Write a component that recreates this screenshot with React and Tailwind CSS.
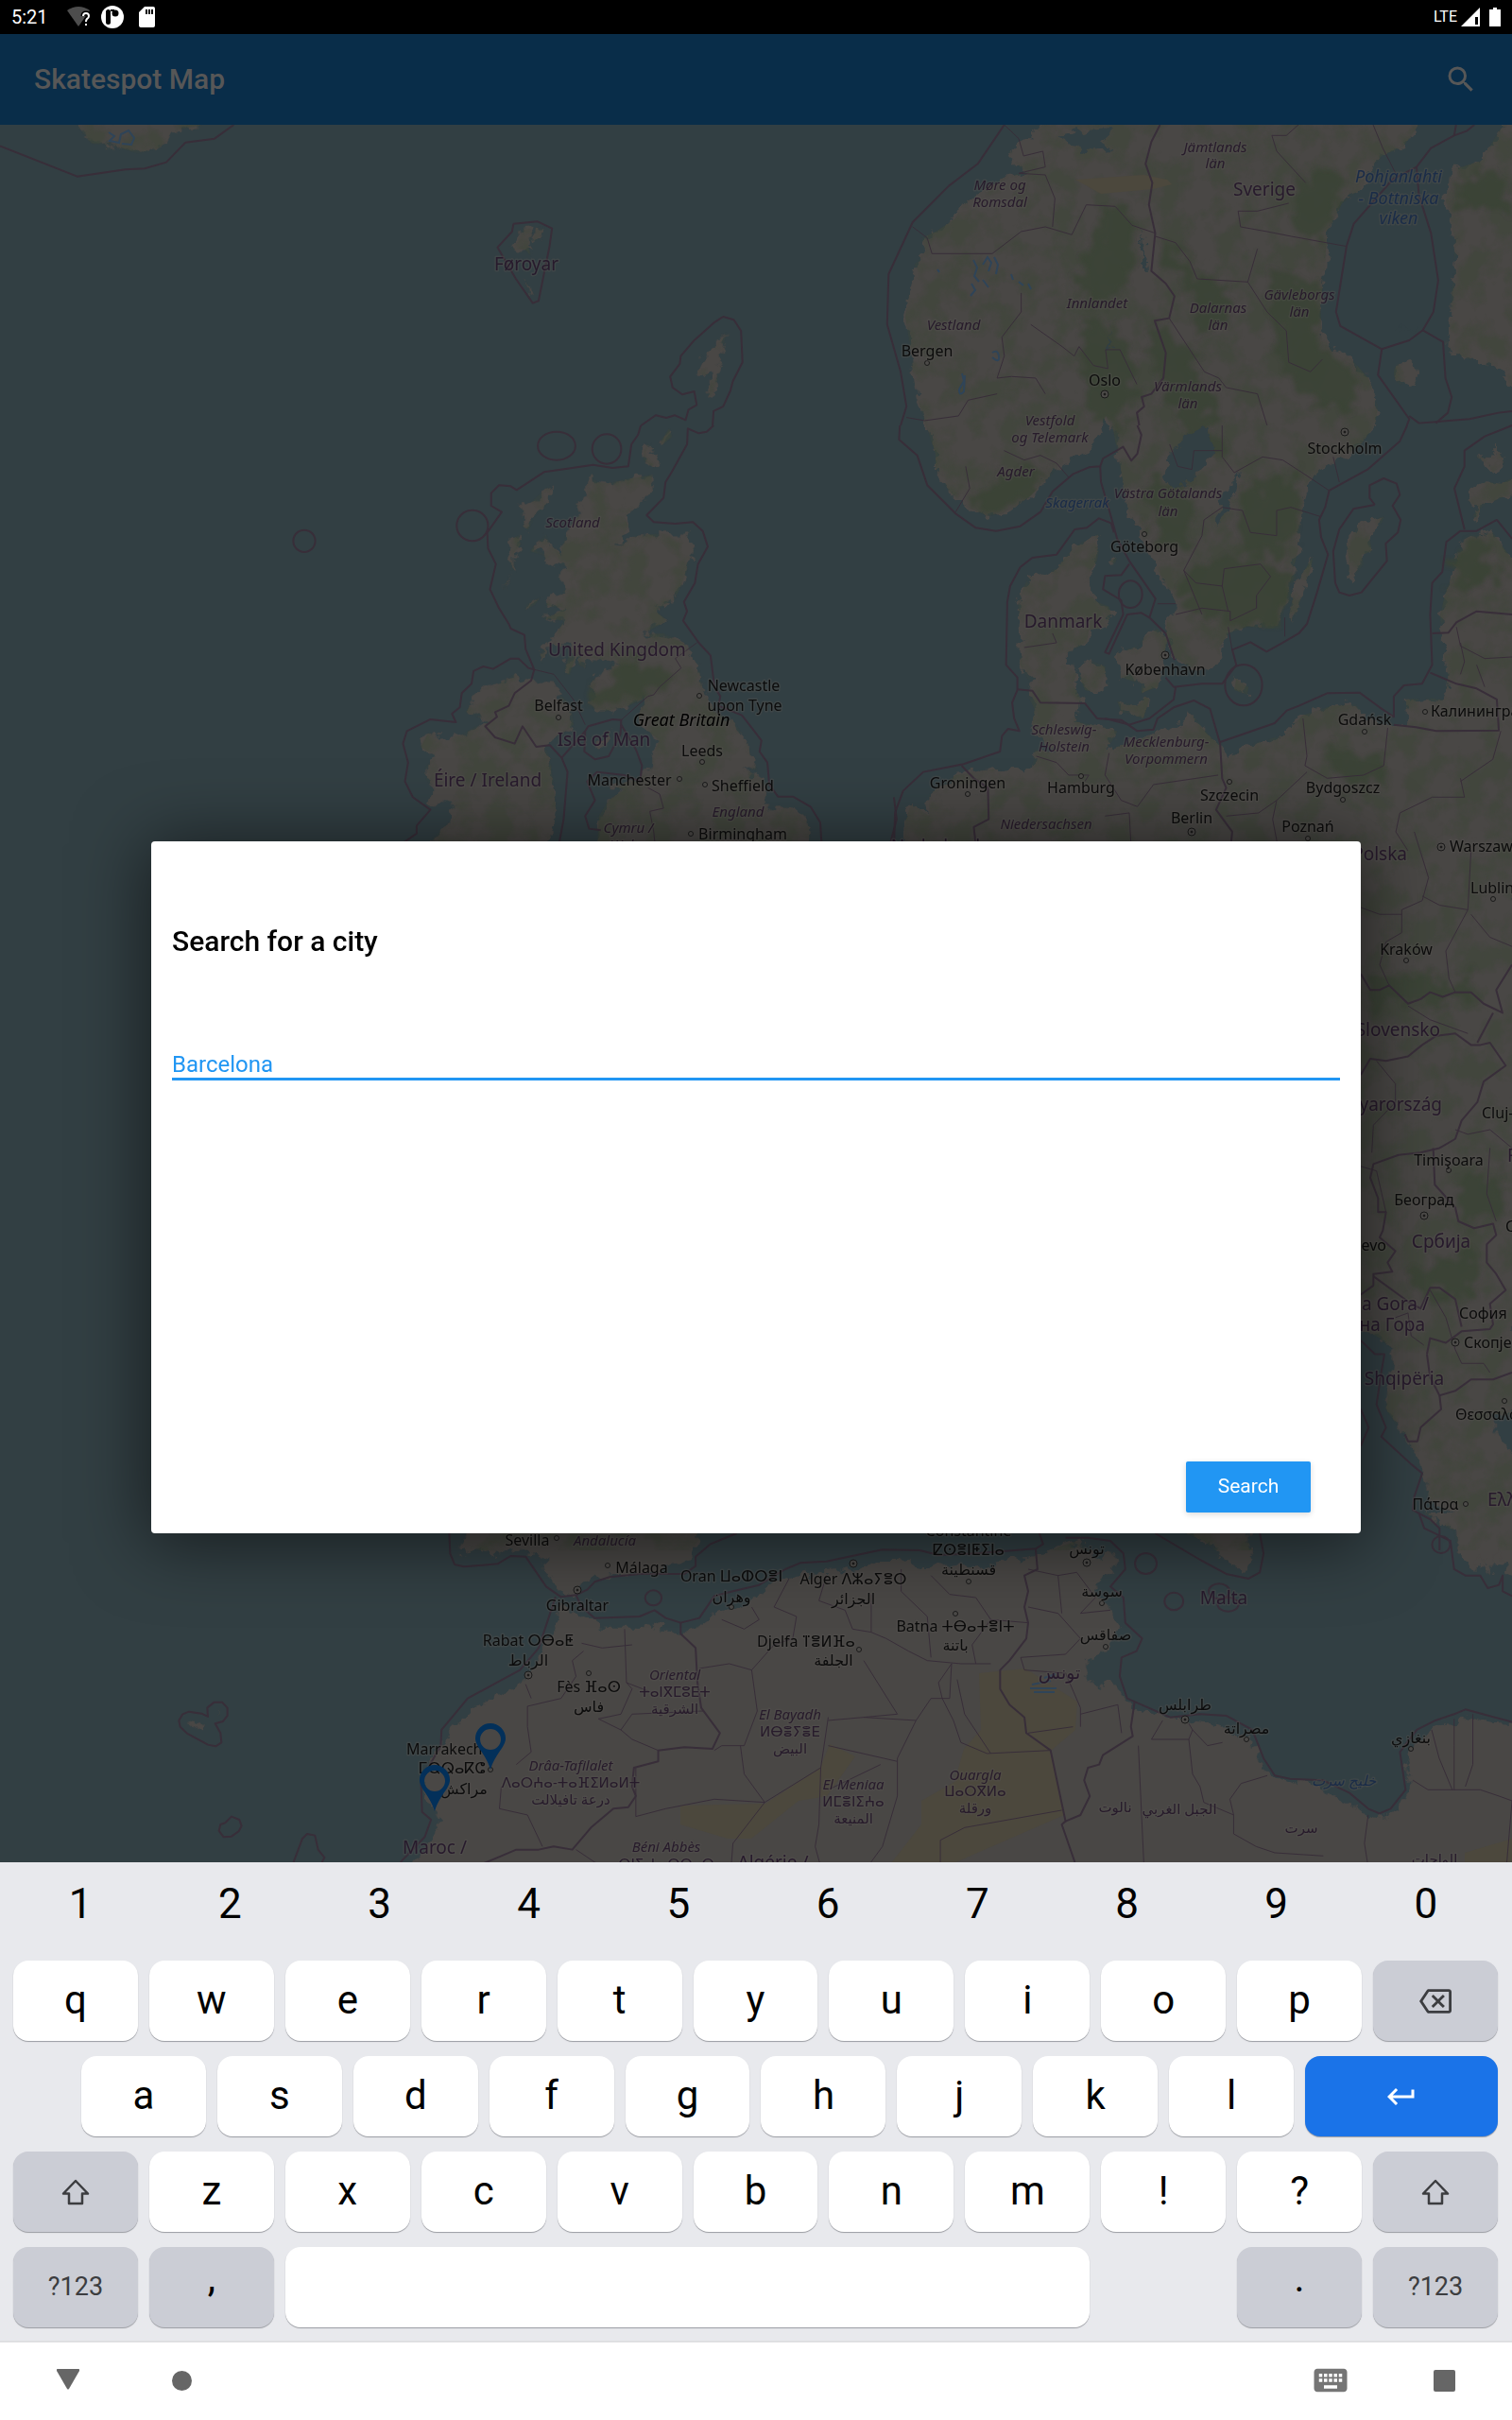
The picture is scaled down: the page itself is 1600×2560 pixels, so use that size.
import React, { useState } from "react";
import { MdSearch, MdOutlineBackspace, MdKeyboardReturn, MdKeyboard } from "react-icons/md";

/* Each map sheet is digitised on its own grid; `t` places it on the map. */
const SHEETS = [
  {
    t: "scale(.5102 .3333)",
    land: [
      "150,380 430,380 415,398 370,410 330,470 290,488 230,460 190,455",
      "1505,1055 1500,1110 1490,1150 1495,1165 1480,1250 1470,1260 1475,1190 1450,1190 1450,1160 1470,1110 1485,1100",
      "1085,730 1100,725 1105,745 1095,775 1100,810 1088,790 1060,790 1075,765",
      "1112,722 1130,720 1118,760 1105,765",
      "1088,880 1105,930 1095,925",
    ],
    lines: [
      "0,463 160,560 260,538 300,535 345,515 370,475 385,452 445,440 485,396",
      "1065,710 1115,703 1145,725 1140,780 1117,955 1105,962 1070,885 1032,785 1062,735 1065,710",
      "1330,1350 1360,1318 1382,1326 1400,1318 1422,1333 1428,1300 1445,1285 1440,1242 1415,1252 1395,1230 1390,1195 1410,1155 1412,1130 1440,1080 1480,1025 1500,1005 1522,1015 1537,1050 1540,1150 1520,1210 1515,1240 1500,1290 1480,1305 1478,1350",
    ],
    thin: [],
  },
  {
    t: "translate(800 0) scale(.5102 .3333)",
    land: [],
    lines: [
      "515,396 460,520 400,590 325,705 275,870 272,1030 300,1180 312,1290 300,1350",
      "838,396 820,450 808,520 822,580 815,650 828,740 820,860 850,900 868,940 857,1010 827,1018 850,1120 845,1200 820,1250 800,1260 805,1290 790,1310 795,1350",
      "1490,396 1475,415 1448,430 1400,470 1370,530 1320,570 1240,710 1225,780 1203,990 1212,1035 1298,1108 1290,1190 1355,1330 1350,1350",
      "1448,430 1452,396",
      "1370,530 1375,620 1400,740 1415,890 1405,990 1383,1048 1355,1080 1298,1108",
      "1355,1320 1375,1343 1480,1330 1540,1310 1568,1305",
      "1383,1048 1425,1085 1430,1200 1443,1260 1435,1310 1410,1343",
    ],
    thin: [
      "515,396 545,440 555,495 595,480 600,530 545,550",
      "545,550 600,555 620,630 615,720",
      "325,720 355,755 365,805 490,805 550,735 600,720 655,745 685,650 745,655 780,715 828,740",
      "828,750 870,770 900,830 915,885 1020,895 1040,790",
      "1280,396 1300,470 1330,560",
      "1125,396 1100,430 1070,430 1080,480 1140,580",
      "1105,645 1040,670 1000,670 1005,720 1060,735 1110,750 1225,782",
      "1020,895 1060,990 1100,1050 1105,1150 1150,1180 1175,1140",
      "550,930 550,990 510,1070 515,1130 500,1200 530,1195 580,1200 600,1250",
      "570,1030 635,1100 660,1130 670,1100 700,1160 730,1170 725,1110 755,1110 790,1220",
      "857,1010 930,1180 960,1200 975,1230 1040,1250 1060,1350",
      "312,1325 350,1335 420,1320 440,1270 500,1250",
    ],
  },
  {
    t: "translate(300 450) scale(.4146 .3333)",
    land: [
      "785,165 800,180 830,185 870,172 940,158 940,210 905,250 870,290 880,320 850,385 900,350 950,345 1030,347 1050,380 1040,430 1020,490 1000,550 960,580 950,590 980,620 910,665 970,660 1020,690 1060,760 1070,840 1100,910 1150,940 1185,1010 1190,1040 1210,1095 1170,1085 1230,1130 1225,1210 1300,1215 1340,1260 1345,1330 1340,1360 800,1360 805,1240 830,1190 870,1155 820,1140 900,1130 945,1080 940,1050 960,1000 910,950 905,920 930,860 880,890 830,905 800,905 775,880 790,850 780,830 800,790 860,760 830,745 770,735 770,770 755,760 750,720 730,790 715,790 725,740 740,720 725,700 690,700 660,740 655,730 680,680 690,680 715,620 665,612 690,600 720,580 670,570 680,540 720,520 700,490 715,470 725,450 680,440 660,410 630,400 640,380 670,350 690,390 710,410 710,370 720,340 735,310 760,280 745,250 775,230 765,210",
      "680,190 680,240 640,290 625,330 610,320 620,290 605,270 605,250 635,240",
      "600,350 605,380 590,400 590,460 580,460 580,400 570,370",
      "575,480 570,500 560,520", "655,545 640,570 615,585 620,570",
      "590,790 615,810 690,815 700,850 720,870 735,900 740,950 730,960 700,990 670,1020 680,1060 690,1150 695,1220 670,1360 370,1360 380,1310 430,1250 430,1210 370,1200 380,1150 350,1100 390,1050 350,1020 370,975 400,985 450,985 500,950 520,940 465,910 500,840 550,820",
      "790,1020 835,965 830,990 805,1025", "930,60 945,70 935,90 960,90 960,105 940,130 920,110 920,80", "985,10 992,35 970,60 960,55",
    ],
    lines: [
      "912,0 905,30 888,60 880,130 840,135 790,125 725,137 665,148 595,205 580,193 550,190 530,215 530,255 557,275 520,340 522,390 542,440 527,520 550,580 575,630 580,645 615,665 618,710 640,775 625,770 600,740 580,740 535,773 510,765 485,780 480,820 455,850 450,895 430,915 440,942 375,933 315,970 305,1010 318,1070 310,1130 330,1180 375,1220 340,1270 340,1295 300,1330",
      "1098,0 1080,20 1060,25 1032,10 1030,60 990,150 975,180 970,230 927,285 945,307 1000,312 1045,307 1070,335 1083,385 1058,440 1050,500 1022,560 1030,590 1020,620 1060,690 1090,730 1100,830 1115,860 1110,890 1170,920 1195,960 1220,1000 1215,1035 1235,1070 1240,1140 1262,1178 1300,1178 1345,1210 1370,1260 1373,1320",
      "640,775 632,810 590,850 575,890 540,910 545,925 515,955 540,990 590,1010 610,955 645,1020 680,1015 710,1055 725,1100 715,1250 700,1350",
      "710,1055 770,970 778,955 840,933 862,935 860,980 830,1050 795,1060 768,1035 770,970",
      "862,950 900,1030 915,1080 910,1130 870,1110 800,1100 775,1130 795,1190 770,1240 780,1280 810,1285",
      "1558,1180 1565,1250 1548,1330",
    ],
    thin: [
      "640,775 690,790 740,870 770,950",
      "862,935 930,860 945,855 960,830 1015,770 1000,740 1055,690",
      "930,1150 960,1170 970,1215 935,1225 945,1290 950,1350",
    ],
    rings: [[697, 65, 48, 45], [825, 75, 37, 47], [482, 318, 40, 49], [53, 367, 28, 35]],
  },
  {
    t: "translate(930 450) scale(.4274 .3333)",
    land: [
      "545,345 535,370 545,400 540,430 520,470 525,540 540,560 570,575 575,600 560,640 520,650 515,690 470,720 470,750 490,790 480,820 500,870 490,940 560,960 590,970 585,990 560,1030 640,1000 700,970 750,950 770,910 790,940 800,960 830,1000 850,1020 860,1060 920,1010 1000,985 1050,920 1120,890 1180,885 1220,940 1310,960 1305,870 1350,865 1400,870 1410,800 1395,700 1390,600 1405,520 1425,460 1440,380 1480,350 1520,340 1570,430 1640,430 1640,1400 60,1400 65,1260 80,1200 125,1240 125,1170 190,1110 260,1095 330,1085 360,1110 380,1080 385,1030 440,1040 400,990 380,950 385,900 370,860 380,830 350,760 350,700 345,560 370,480 440,455 480,390 510,365",
      "490,770 520,745 560,765 565,830 540,850 510,840", "590,720 640,700 660,670 690,645 715,680 700,760 690,830 650,850 650,820 600,800 590,760", "590,875 640,890 660,860 670,870 655,930 600,910", "885,805 915,830 912,855 880,840",
      "1250,290 1245,310 1215,345 1220,400 1195,410 1200,440 1165,500 1158,470 1165,430 1158,380 1190,310", "1075,415 1070,450 1035,590 1020,625 1015,600 1035,500",
      "1460,200 1500,180 1540,185 1580,160 1580,230 1550,225 1490,260 1480,300 1470,290 1485,260 1460,240", "1480,100 1510,100 1530,70 1550,120 1520,150 1505,120", "570,430 590,420 585,440",
    ],
    lines: [
      "52,0 50,45 95,95 120,190 190,280 240,325 290,335 350,320 400,275 430,210 480,155 520,133 548,130 555,105 605,68 625,112 640,90 650,30 640,0",
      "1308,0 1290,50 1210,140 1115,207 1105,260 1090,300 1095,355 1112,410 1085,530 1060,630 1040,660 1000,690 960,718 920,688 875,712 885,760 850,820 800,820 730,830 710,800",
      "1228,252 1215,230 1215,190 1250,168 1282,185 1290,220 1272,255 1292,300 1285,340 1255,375 1258,430 1220,490 1195,530 1165,540 1140,530 1130,500 1125,400 1140,330 1175,265 1228,252",
      "582,340 575,310 545,295 515,325 485,330 440,410 380,420 350,450 325,510 318,560 315,760 343,800 343,840 330,880 335,930 348,970 320,963 305,985 300,1035 210,1075 110,1100 60,1160 40,1230 38,1320",
      "845,1005 980,945 1010,905 1040,890 1110,850 1190,848 1240,895 1275,925 1275,860 1300,825 1345,820 1370,760 1365,600 1370,500 1395,465 1405,370 1440,335 1480,335 1530,300 1568,360",
      "1450,330 1425,200 1450,130 1450,80 1500,35 1568,0",
      "343,838 380,842 400,880 510,882 540,930 600,935 640,970 680,965 690,930 730,895 780,873 820,900 845,1010 850,1120 860,1150 835,1220 875,1290 870,1350",
      "548,130 550,180 575,290 590,360 620,430 685,550 670,610 710,660 732,745",
      "620,440 600,475 560,478 555,520 600,555 605,600 560,720 570,725 615,600 650,595 670,610",
      "735,830 730,870 670,930 620,950 560,930", "1275,950 1330,958 1380,970 1535,968 1530,870 1480,835 1430,820 1365,785",
      "1370,660 1410,658 1430,625 1480,590 1568,600", "205,1080 235,1120 270,1150 272,1250 235,1275 240,1330",
    ],
    thin: [
      "430,660 440,690 360,705", "865,640 875,715", "690,566 735,566", "1005,610 1005,670",
      "735,600 800,580 870,590 870,620 935,580 935,540 970,480 945,440 855,455 850,510 785,500 755,460 800,350 805,300 850,260 900,270 920,340 985,350 985,270 1020,260 1095,290",
      "755,460 800,600", "850,510 865,590", "310,80 360,110 400,95 440,120 470,165", "215,130 225,200 190,275",
      "1050,930 1060,1050 1055,1080 1110,1120 1200,1110 1250,1080 1260,960", "1440,1120 1450,1180 1370,1180 1290,1230 1280,1290 1310,1350",
      "1540,970 1520,1060 1440,1130", "985,1190 975,1250 990,1350", "860,1240 940,1230 985,1190 1060,1100",
      "390,1050 440,1070 470,1110 520,1110 510,1130", "570,1040 560,1110 600,1190 640,1210 680,1140 840,1110",
      "560,1240 620,1230 625,1350", "1440,690 1450,750 1440,790", "1430,640 1440,700 1500,740 1568,735", "1480,760 1500,830", "850,0 850,100 880,150 950,100 1000,110 1060,160 1115,207", "1125,100 1140,180",
      "720,60 740,130 775,140 780,80 850,80",
    ],
    rings: [[903, 824, 46, 65], [623, 536, 29, 43]],
  },
  {
    t: "translate(1380 880) scale(.3333 .4847)",
    land: [
      "-200,-10 670,-10 670,1275 600,1270 600,1300 640,1340 670,1370 670,1600 530,1600 470,1510 480,1490 400,1460 370,1370 330,1330 260,1260 285,1130 240,1105 200,1090 -200,900",
    ],
    lines: [
      "180,310 210,345 240,345 270,335 330,375 370,365 400,350 440,360 480,350 530,350 570,375 630,395 610,345 660,290",
      "180,530 210,495 260,500 330,490 375,465 420,445 480,440 530,465 560,465 590,460 640,510 570,545 550,590 500,630 480,670 430,690 370,700 300,705 220,725 210,755 235,800 235,830 260,830 250,870 240,885 290,915 265,940 280,960 220,965 220,990 180,1010",
      "600,395 550,460", "410,690 415,770 480,820 490,850 540,865 600,855 610,880 580,900 580,940 610,965 640,1000 590,1030 600,1075 590,1085 500,1090 450,1115 400,1105 390,1140",
      "220,970 300,1010 340,1030 370,1040 400,995 430,995 480,1020 500,1080", "390,1140 400,1190 430,1230 480,1220 530,1195 600,1195 660,1180", "430,1230 435,1260 370,1300 360,1330 330,1330 320,1315",
      "180,1110 225,1140 255,1140 245,1180 230,1250 260,1300 245,1320 340,1380 375,1400 350,1450 345,1480 400,1500 430,1520 430,1568", "180,1260 205,1300 180,1340",
    ],
    thin: [
      "350,0 395,100 375,150 310,170 310,220 260,240 240,290 270,335", "375,140 430,160 520,170 530,40", "180,165 240,180 310,180", "520,170 450,260 460,320 480,350",
      "530,180 590,230 660,250", "230,500 290,550 290,590 220,640 215,700", "180,730 230,740 260,830", "480,650 520,660 590,650 660,690", "590,690 580,790 610,850",
      "400,1000 450,1060 480,1130 500,1160 570,1160 590,1180", "290,1060 330,1050 340,1100 380,1120", "330,380 400,410 520,440",
    ],
  },
  {
    t: "translate(400 1600) scale(.3954 .3333)",
    land: [
      "235,0 235,66 215,130 270,120 310,135 360,115 420,130 445,160 450,190 470,225 500,260 530,262 545,225 580,210 620,200 680,195 760,190 790,155 820,165 850,100 870,66 870,0",
      "490,290 480,350 440,420 420,490 380,545 310,590 250,620 190,700 150,760 130,830 125,900 165,960 150,1030 90,1130 3060,1130 3060,670 2980,665 2920,650 2830,690 2770,740 2750,800 2765,880 2710,960 2670,970 2610,930 2500,865 2400,840 2360,790 2340,720 2290,700 2250,670 2170,660 2100,650 2020,620 1985,570 1960,530 1930,560 1890,510 1890,480 1940,440 1990,370 1960,310 1930,270 1920,220 1960,200 1975,150 1960,120 1930,160 1910,120 1870,90 1820,110 1780,130 1700,150 1600,175 1500,165 1440,170 1400,150 1340,150 1290,180 1220,190 1150,195 1060,220 1020,260 980,300 900,320 850,370 800,380 760,370 740,350 720,370 690,365 600,365 550,330 520,310",
      "2150,60 2330,60 2330,110 2342,120 2325,180 2290,165 2260,140 2210,90", "2800,0 2880,60 2900,160 2935,180 2950,130 2975,200 2985,140 3000,120 3020,190 3060,220 3060,0", "2820,10 2840,40 2815,35",
    ],
    lines: [
      "190,40 193,130 205,165 230,172 320,163 355,138 395,140 450,235 490,268 530,262 560,245 580,220 620,205 700,195 820,195 850,170 850,140 890,100 960,66",
      "475,268 430,430 380,500 310,545 240,590 170,690 168,740 115,850 118,950 142,975 125,1030 60,1110",
      "530,262 545,300 580,335 700,330 740,310 770,335 810,350 860,335 900,265 950,250 1020,230 1090,180 1130,160 1200,155 1350,118 1450,120 1500,135 1600,130 1760,115 1780,100 1770,66",
      "1840,80 1900,80 1960,90 1995,130 2000,180 1960,235 1995,270 2000,350 2045,400 2030,440 1990,460 1985,520 2005,590 2120,650 2200,640 2270,645 2340,690 2370,780 2400,835 2440,845 2530,850 2600,890 2650,940 2680,955 2710,940 2750,880 2735,760 2780,690 2830,660 2880,640 2910,625 3035,665",
      "810,350 810,385 850,430 855,540 865,620 915,700 895,750 820,745 750,755 750,790 685,810 680,870 690,900 670,935 630,940 570,1000 520,1070 470,1060 430,1070 370,1070 330,1090 260,1125",
      "1760,115 1765,180 1730,200 1740,250 1730,300 1740,350 1735,400 1690,470 1665,500 1665,560 1690,610 1730,650 1735,700 1800,755 1840,980 1830,990 1865,1110",
      "2025,600 2015,680 2020,710 1940,770 1930,800 1900,810 1890,850 1905,900 1880,960 1840,980",
      "2080,66 2200,150 2270,195 2330,210 2360,190 2370,130 2360,66", "2785,0 2800,50 2870,90 2880,180 2910,200 2950,200 2970,240 3000,230 3010,200 3010,250 3035,265",
    ],
    thin: [
      "660,370 665,540 680,560 650,640 590,655", "665,540 730,570", "545,415 600,430 680,420", "550,440 520,470 530,520 490,590 400,615 400,680 410,760 370,800", "395,545 410,590",
      "590,655 650,690 680,720 750,755", "650,690 680,640 870,630", "860,495 940,480 1000,500 1015,630 980,740 920,740 900,755", "970,740 980,830 1035,920 1185,810 1205,650",
      "690,965 770,940 900,910 1035,920 950,1050 945,1125", "1185,810 1180,990 1170,1060 1185,1125", "1205,660 1300,650 1440,660 1390,780 1390,900 1350,1060 1310,1125", "1300,650 1390,640 1300,470",
      "1205,740 1390,790", "1440,660 1480,590 1530,590 1535,480", "1535,480 1500,540 1510,590 1540,660 1560,730 1630,765 1800,755", "1550,530 1570,640 1640,765", "1320,260 1320,380 1360,400 1420,440 1470,470 1560,480 1640,480",
      "1000,300 1020,340 980,370 920,340", "1100,210 1060,300 1120,330 1110,400 1060,420 1000,500", "1200,200 1180,280 1250,310 1270,370 1320,380", "1400,180 1400,250 1470,330 1480,460", "1480,200 1530,260 1600,270 1640,340 1740,350",
      "1640,340 1590,420 1600,480", "330,870 325,940 400,960 440,1060", "530,1070 580,1110 620,1125", "1505,1125 1505,1040 1570,1000 1830,945", "690,810 690,965", "1345,800 1205,880",
      "2035,740 2050,1125", "2170,720 2180,830 2200,870 2210,920 2290,960 2290,1020 2350,1060 2400,1080 2530,1090", "2380,835 2310,860 2280,910 2290,960", "2650,960 2640,1050 2650,1125", "2770,850 2810,880 2950,880 3000,900 3035,915 3020,1125",
      "2880,655 2880,740 2880,880", "2930,640 2930,800 2910,870", "2820,690 2840,780 2875,880", "2100,660 2070,720 2170,720 2180,690 2170,670", "2180,690 2220,740 2260,730",
      "1740,180 1820,200 1870,190 1920,270 1880,320 1960,310", "1740,300 1820,320 1880,400 1840,450 1720,460 1730,500 1840,510 1880,620 1880,680", "1820,200 1830,320", "1880,640 1980,610 1990,700", "1740,700 1860,680",
    ],
    rings: [[737, 271, 22, 24], [2055, 162, 29, 33], [2845, 102, 24, 27], [2251, 250, 28, 24], [2275, 292, 28, 22], [2130, 282, 25, 28]],
  },
  {
    t: "translate(0 1560) scale(.3333)",
    land: ["595,783 645,792 640,806 615,808", "680,762 697,748 692,758"],
    lines: [
      "600,752 640,758 660,768 658,740 680,722 705,722 722,740 722,765 708,783 683,790 700,820 703,850 685,862 660,857 595,822 572,800 568,780 580,760 600,752",
      "715,1105 735,1085 760,1095 767,1115 758,1132 735,1148 710,1150 695,1130 700,1110 715,1105", "932,1230 960,1155 975,1140 1000,1145 1010,1190 1030,1215 1022,1230",
    ],
    thin: [],
  },
];

const SCANDINAVIA =
  "1115,120 1090,145 1068,160 1072,170 1085,182 1065,186 1040,200 1030,208 1020,215 1010,232 990,245 975,252 980,265 968,280 964,300 958,335 962,360 966,395 972,425 980,450 990,480 990,500 1005,520 1022,536 1045,546 1065,543 1090,525 1110,505 1125,490 1150,478 1163,462 1170,440 1178,455 1185,490 1190,520 1195,545 1208,565 1218,590 1232,615 1246,643 1235,655 1234,670 1243,695 1258,705 1275,710 1293,705 1290,685 1300,670 1320,663 1348,665 1358,650 1366,613 1374,580 1378,540 1384,510 1400,495 1420,485 1440,470 1455,450 1458,430 1448,400 1430,380 1405,365 1398,345 1397,320 1402,290 1403,265 1405,245 1420,215 1440,200 1450,180 1462,165 1485,155 1510,120";
const FINLAND = "1600,120 1585,140 1568,170 1535,180 1530,213 1540,253 1535,333 1532,370 1555,380 1580,387 1612,420 1612,120";

const LAKES = [
  "1254,460 1278,452 1284,480 1267,498 1256,510 1246,515 1231,508 1238,482", "1312,498 1308,520 1293,552 1287,556 1293,525", "1173,342 1178,370 1172,372 1176,355",
  "1208,240 1213,285 1208,285", "1120,145 1150,138 1178,136 1165,150 1178,158 1150,160", "1478,345 1500,348 1478,352",
];

const GREENS = [
  "1215,342 1240,345 1260,380 1282,420 1290,480 1260,470 1240,430 1225,400", "1145,345 1190,350 1205,420 1180,460 1150,430", "1165,230 1190,215 1200,290 1170,320 1140,310",
  "1380,190 1405,175 1425,205 1395,260 1365,235", "1258,295 1300,300 1300,340 1268,350", "1340,290 1395,300 1395,370 1430,385 1440,430 1390,430 1350,370", "1230,260 1262,275 1258,300 1235,290",
  "1255,600 1300,590 1350,600 1365,610 1355,660 1300,660 1250,645", "1215,510 1255,500 1260,580 1220,570", "1310,520 1370,500 1375,560 1350,590 1310,580", "1070,500 1110,490 1090,520 1050,545 1025,530",
  "1540,190 1575,180 1600,190 1600,225 1545,220", "1530,590 1570,570 1590,620 1540,620", "1440,1030 1560,1035 1560,1060 1450,1065", "1490,1350 1560,1320 1560,1370 1510,1370", "1540,1245 1585,1240 1590,1290 1545,1290",
  "630,735 660,705 710,705 700,730 660,740 620,745", "1400,790 1460,800 1470,830 1420,830",
];

const DESERTS = [
  "720,1910 810,1908 868,1870 878,1845 905,1858 875,1900 845,1905 795,1945 770,1945 720,1930", "1036,1770 1085,1765 1140,1800 1138,1830 1112,1852 1126,1920 1000,1975 940,1975 975,1930 975,1905 1010,1885 1020,1850 1038,1830",
  "1550,1960 1600,1945 1600,1975 1550,1975", "1138,190 1210,185 1235,190 1240,195 1220,200 1165,205",
];

/* text, x, baseline, anchor (m = middle, s = start, e = end) */
const CITIES = [
  ["Bergen", 981, 377], ["Oslo", 1169, 408], ["Belfast", 591, 752], ["Newcastle", 787, 731], ["upon Tyne", 788, 752], ["Leeds", 743, 800], ["Manchester", 666, 831], ["Sheffield", 786, 837],
  ["Birmingham", 786, 888], ["Stockholm", 1423, 480], ["Göteborg", 1211, 584], ["København", 1233, 714], ["Groningen", 1024, 834], ["Hamburg", 1144, 839], ["Szczecin", 1301, 847],
  ["Bydgoszcz", 1421, 839], ["Gdańsk", 1444, 767], ["Калининград", 1514, 758, "s"], ["Berlin", 1261, 871], ["Poznań", 1384, 880], ["Warszawa", 1534, 901, "s"], ["Lublin", 1556, 945, "s"],
  ["Kraków", 1488, 1010], ["Cluj-Napoca", 1568, 1183, "s"], ["Timişoara", 1533, 1233], ["Београд", 1507, 1275], ["Sarajevo", 1467, 1323, "e"], ["Craiova", 1593, 1303, "s"], ["София", 1544, 1395, "s"],
  ["Скопје", 1549, 1426, "s"], ["Θεσσαλονίκη", 1540, 1502, "s"], ["Πάτρα", 1519, 1597], ["Sevilla", 558, 1635], ["Málaga", 679, 1664], ["Gibraltar", 611, 1704], ["Oran ⵡⴰⵀⵔⴻⵏ", 774, 1673],
  ["وهران", 774, 1695], ["Alger ⴷⵣⴰⵢⴻⵔ", 903, 1676], ["الجزائر", 903, 1697], ["Rabat ⵔⴱⴰⵟ", 559, 1741], ["الرباط", 559, 1762], ["Fès ⴼⴰⵙ", 623, 1790], ["فاس", 623, 1811], ["Djelfa ⴶⴻⵍⴼⴰ", 853, 1742],
  ["الجلفة", 882, 1762], ["Marrakech", 430, 1856, "s"], ["ⵎⵕⵕⴰⴽⵛ", 478, 1876], ["مراكش", 491, 1898], ["Constantine", 1025, 1625], ["ⵇⵙⴻⵏⵟⵉⵏⴰ", 1025, 1645], ["قسنطينة", 1025, 1666],
  ["تونس", 1150, 1644], ["سوسة", 1166, 1689], ["صفاقس", 1170, 1735], ["Batna ⵜⴱⴰⵜⴻⵏⵜ", 1011, 1726], ["باتنة", 1011, 1746], ["طرابلس", 1254, 1809], ["مصراتة", 1319, 1834], ["بنغازي", 1493, 1844],
];
const COUNTRIES = [
  ["Føroyar", 557, 286], ["Sverige", 1338, 207], ["United Kingdom", 653, 694], ["Isle of Man", 639, 789], ["Éire / Ireland", 516, 832], ["Danmark", 1125, 664], ["Nederland", 990, 902],
  ["Polska", 1489, 910, "e"], ["Slovensko", 1524, 1096, "e"], ["Magyarország", 1526, 1175, "e"], ["Србија", 1525, 1320], ["Crna Gora /", 1512, 1386, "e"], ["Црна Гора", 1508, 1408, "e"],
  ["Shqipëria", 1486, 1465], ["Ελλάς", 1574, 1593, "s"], ["România", 1595, 1229, "s"], ["Malta", 1295, 1697], ["تونس", 1121, 1776], ["Maroc /", 460, 1961], ["Algérie /", 818, 1977],
];
const REGIONS = [
  ["Jämtlands", 1286, 161], ["län", 1286, 178], ["Møre og", 1058, 201], ["Romsdal", 1058, 219], ["Innlandet", 1161, 326], ["Vestland", 1009, 349], ["Värmlands", 1257, 414], ["län", 1257, 432],
  ["Dalarnas", 1289, 331], ["län", 1289, 349], ["Gävleborgs", 1375, 317], ["län", 1375, 335], ["Vestfold", 1111, 450], ["og Telemark", 1111, 468], ["Scotland", 606, 558], ["England", 781, 864],
  ["Cymru /", 665, 881], ["Wales", 665, 899], ["Agder", 1075, 504], ["Västra Götalands", 1236, 527], ["län", 1236, 546], ["Schleswig-", 1126, 777], ["Holstein", 1126, 795], ["Mecklenburg-", 1234, 790],
  ["Vorpommern", 1234, 808], ["Niedersachsen", 1107, 877], ["Andalucía", 640, 1635], ["Oriental", 714, 1777], ["El Bayadh", 836, 1819], ["Drâa-Tafilalet", 604, 1873], ["El Meniaa", 903, 1893],
  ["Béni Abbès", 705, 1959], ["Ouargla", 1032, 1883],
];
const REGIONS_LOCAL = [
  ["ⵜⴰⵏⴳⵎⵓⴹⵜ", 714, 1795], ["الشرقية", 714, 1813], ["ⵍⴱⴻⵢⴻⴹ", 836, 1837], ["البيض", 836, 1855], ["ⴷⴰⵔⵄⴰ-ⵜⴰⴼⵉⵍⴰⵍⵜ", 604, 1891], ["درعة تافيلالت", 604, 1909], ["ⵍⵎⴻⵏⵉⵄⴰ", 903, 1911],
  ["المنيعة", 903, 1929], ["ⴱⵏⵉ ⵄⴰⴱⴱⴰⵙ", 705, 1977], ["ⵡⴰⵔⴳⵍⴰ", 1032, 1900], ["ورقلة", 1032, 1918], ["نالوت", 1180, 1917], ["الجبل الغربي", 1248, 1919], ["سرت", 1377, 1939], ["الواحات", 1518, 1972],
];
const WATERS = [["Pohjanlahti", 1480, 193, "m"], ["- Bottniska", 1480, 216, "m"], ["viken", 1480, 237, "m"]];
const SMALL_WATERS = [["Skagerrak", 1140, 537], ["خليج سرت", 1422, 1889]];
const DOTS = [
  [981, 384], [591, 759], [740, 736], [743, 806], [719, 824], [746, 830], [731, 882], [1211, 565], [1024, 840], [1144, 821], [1301, 827], [1421, 846], [1444, 774], [1508, 753], [1384, 887], [1580, 951],
  [1488, 1016], [1533, 1238], [1592, 1482], [1551, 1591], [589, 1627], [643, 1656], [774, 1700], [623, 1770], [909, 1745], [519, 1872], [1025, 1673], [1166, 1696], [1170, 1742], [1011, 1707], [1319, 1840], [1493, 1850],
];
const CAPITALS = [[1169, 417], [1423, 457], [1233, 693], [1261, 880], [1525, 896], [1507, 1286], [1540, 1420], [611, 1682], [903, 1654], [559, 1772], [1150, 1653], [1254, 1819]];

const ANCHOR = { m: "middle", s: "start", e: "end" };

function Labels({ items, size, className }) {
  return (
    <g fontSize={size} className={className} stroke="#565350" strokeOpacity=".35" strokeWidth="3" paintOrder="stroke" strokeLinejoin="round">
      {items.map(([text, x, y, anchor = "m"], i) => (
        <text key={i} x={x} y={y} textAnchor={ANCHOR[anchor]}>
          {text}
        </text>
      ))}
    </g>
  );
}

function Land() {
  return (
    <>
      <polygon points={SCANDINAVIA} />
      <polygon points={FINLAND} />
      <ellipse cx="1487" cy="395" rx="12" ry="13" />
      {SHEETS.map((s) => (
        <g key={s.t} transform={s.t}>
          {s.land.map((p) => (
            <polygon key={p} points={p} />
          ))}
        </g>
      ))}
    </>
  );
}

function Pin({ x, y }) {
  return (
    <path
      transform={`translate(${x} ${y})`}
      fill="#03305a"
      fillRule="evenodd"
      d="M0 0C-5-17-16-24-16-33A16 16 0 0 1 16-33C16-24 5-17 0 0ZM0-43A11 11 0 1 0 0-21A11 11 0 1 0 0-43Z"
    />
  );
}

function WorldMap() {
  const region = { filterUnits: "userSpaceOnUse", x: "0", y: "120", width: "1600", height: "1860", colorInterpolationFilters: "sRGB" };
  return (
    <svg
      className="absolute inset-0 h-full w-full font-['Noto_Sans','DejaVu_Sans',sans-serif]"
      viewBox="0 132 1600 1838"
      preserveAspectRatio="xMidYMin slice"
      role="img"
      aria-label="Map of Europe and North Africa"
    >
      <defs>
        <filter id="coast" {...region}>
          <feTurbulence type="fractalNoise" baseFrequency=".09" numOctaves="3" seed="4" />
          <feDisplacementMap in="SourceGraphic" scale="16" xChannelSelector="R" yChannelSelector="G" />
        </filter>
        <filter id="woods" {...region}>
          <feTurbulence type="fractalNoise" baseFrequency=".035" numOctaves="5" seed="9" />
          <feColorMatrix values="0 0 0 0 0  0 0 0 0 0  0 0 0 0 0  4 0 0 0 -1.7" />
          <feComposite in="SourceGraphic" operator="in" />
        </filter>
        <filter id="patch" {...region}>
          <feTurbulence type="fractalNoise" baseFrequency=".06" numOctaves="3" seed="2" />
          <feDisplacementMap in="SourceGraphic" scale="40" xChannelSelector="R" yChannelSelector="G" />
          <feGaussianBlur stdDeviation="2" />
        </filter>
        <clipPath id="north">
          <rect x="0" y="120" width="1600" height="1520" />
        </clipPath>
        <clipPath id="mainland">
          <polygon points={SCANDINAVIA} />
          <rect x="1330" y="550" width="270" height="1090" />
          <polygon points={FINLAND} />
          <rect x="600" y="690" width="140" height="60" />
        </clipPath>
      </defs>
      <rect y="120" width="1600" height="1860" fill="#323f43" />
      <g fill="#494745" filter="url(#coast)">
        <Land />
      </g>
      <g clipPath="url(#north)">
        <g fill="#3e4639" filter="url(#woods)" opacity=".6">
          <Land />
        </g>
      </g>
      <g clipPath="url(#mainland)">
        <g fill="#3a4335" filter="url(#patch)" opacity=".85">
          {GREENS.map((p) => (
            <polygon key={p} points={p} />
          ))}
        </g>
      </g>
      <g fill="#4c483d">
        {DESERTS.map((p) => (
          <polygon key={p} points={p} />
        ))}
      </g>
      <g fill="#323f43" filter="url(#coast)">
        {LAKES.map((p) => (
          <polygon key={p} points={p} />
        ))}
      </g>
      <g fill="none" stroke="#2f4458" strokeWidth="2">
        <path d="M1030 275l4 8-3 9 5 6M1040 280l5-8 4 6-3 9M1052 272l4 8-2 10M1028 300l4 7-5 6M1040 296l6 8M1070 290l2 6M1078 298l5 4M1088 300l3 6M992 285l2 3M1050 373q6-4 7 4t-7 1M1018 395l2 8-5 9q0 8 5 2l1-17" />
        <path d="M115 140l6 4-5 5 10 2 2-9 8-4 6 8-3 7-10-1M1092 1782l20-4M1090 1786h28M1094 1790h22M1105 1775l12-4" />
      </g>
      <g fill="none" stroke="#382e39" strokeLinejoin="round">
        {SHEETS.map((s) => (
          <g key={s.t} transform={s.t}>
            {s.thin.map((p) => (
              <polyline key={p} points={p} strokeWidth="1" vectorEffect="non-scaling-stroke" />
            ))}
            {s.lines.map((p) => (
              <polyline key={p} points={p} strokeWidth="2" vectorEffect="non-scaling-stroke" />
            ))}
            {(s.rings || []).map(([cx, cy, rx, ry]) => (
              <ellipse key={cx} cx={cx} cy={cy} rx={rx} ry={ry} strokeWidth="2" vectorEffect="non-scaling-stroke" />
            ))}
          </g>
        ))}
      </g>
      <g fill="#4c4a48" stroke="#1a1a1a">
        {DOTS.map(([x, y]) => (
          <circle key={`${x}-${y}`} cx={x} cy={y} r="2.5" />
        ))}
        {CAPITALS.map(([x, y]) => (
          <g key={`${x}-${y}`}>
            <circle cx={x} cy={y} r="4" />
            <circle cx={x} cy={y} r="1" fill="#1a1a1a" />
          </g>
        ))}
      </g>
      <Labels items={REGIONS} size={15} className="fill-[#271b2b] italic" />
      <Labels items={REGIONS_LOCAL} size={15} className="fill-[#271b2b]" />
      <Labels items={SMALL_WATERS} size={15} className="fill-[#1a2c48] italic" />
      <Labels items={WATERS} size={18} className="fill-[#1a2c48] italic" />
      <Labels items={COUNTRIES} size={19} className="fill-[#271a2c]" />
      <Labels items={CITIES} size={16} className="fill-[#0c0c0c]" />
      <Labels items={[["Great Britain", 721, 768]]} size={18} className="fill-black italic" />
      <Pin x={519} y={1872} />
      <Pin x={460} y={1916} />
    </svg>
  );
}

function StatusBar() {
  return (
    <div className="flex h-9 items-center bg-black px-3 text-white">
      <span className="text-xl leading-9">5:21</span>
      <svg className="ml-5 h-6 w-6" viewBox="0 0 24 24" aria-hidden="true">
        <path d="M0 5Q12-3 24 5L12 22Z" fill="#4d4d4d" />
        <path d="M17 11q0-3 3-3t3 3q0 2-2 3-1 1-1 3M20 19v3" fill="none" stroke="#000" strokeWidth="5" />
        <path d="M17 11q0-3 3-3t3 3q0 2-2 3-1 1-1 3M20 19v2" fill="none" stroke="#fff" strokeWidth="2" />
      </svg>
      <svg className="ml-3 h-6 w-6" viewBox="0 0 24 24" aria-hidden="true">
        <circle cx="12" cy="12" r="12" fill="#fff" />
        <rect x="5" y="4" width="5" height="16" rx="2.5" fill="#000" />
        <circle cx="15" cy="8" r="3.5" fill="#000" />
        <path d="M10 4h4v2h-4z" fill="#000" />
      </svg>
      <svg className="ml-4 h-6 w-[18px]" viewBox="0 0 18 24" aria-hidden="true">
        <path d="M6 1h9q2 0 2 2v18q0 2-2 2H2q-2 0-2-2V7Z" fill="#fff" />
        <path d="M7 4h2v5H7zM10 4h2v5h-2zM13 4h2v5h-2z" fill="#000" />
      </svg>
      <span className="ml-auto text-base">LTE</span>
      <svg className="ml-1 h-5 w-5" viewBox="0 0 20 20" aria-hidden="true">
        <path d="M20 0V20H0ZM18 10h-3v8h3Z" fill="#fff" fillRule="evenodd" />
      </svg>
      <svg className="ml-2.5 h-5 w-3" viewBox="0 0 12 20" aria-hidden="true">
        <path d="M4 0h4v2h4v18H0V2h4Z" fill="#fff" />
      </svg>
    </div>
  );
}

function ShiftIcon() {
  return (
    <svg className="h-9 w-9" viewBox="0 0 36 36" fill="none" stroke="#3c3d40" strokeWidth="2.5" strokeLinejoin="round" aria-hidden="true">
      <path d="M18 6L31 19.500H25V30H11V19.500H5Z" />
    </svg>
  );
}

const KEY = "flex h-[85px] items-center justify-center rounded-2xl shadow-[0_1px_1px_#9a9ca2]";
const LIGHT = "bg-white text-[42px] leading-none text-black pb-0.5";
const DARK = "bg-[#cbcdd5] text-[#3c3d40] text-[27px]";
const MARK = "bg-[#cbcdd5] text-[42px] leading-none text-black pb-5";

function Key({ children, className = "col-span-2", tone = LIGHT, label }) {
  return (
    <button type="button" aria-label={label} className={`${KEY} ${className} ${tone}`}>
      {children}
    </button>
  );
}

function Keyboard() {
  return (
    <div className="relative z-20 border-b-2 border-[#dfe0e2] bg-[#e8e9ed] pb-3.5">
      <div className="grid h-[104px] grid-cols-10 pr-3 pb-4 pl-1.5">
        {[..."1234567890"].map((n) => (
          <button key={n} type="button" className="text-[44px] leading-none text-black">
            {n}
          </button>
        ))}
      </div>
      <div className="grid grid-cols-22 gap-x-3 gap-y-4 pr-[15px] pl-3.5">
        {[..."qwertyuiop"].map((k) => (
          <Key key={k}>{k}</Key>
        ))}
        <Key tone={DARK} label="Backspace">
          <MdOutlineBackspace className="h-[34px] w-[34px]" />
        </Key>
        {[..."asdfghjkl"].map((k) => (
          <Key key={k} className={k === "a" ? "col-span-2 col-start-2" : "col-span-2"}>
            {k}
          </Key>
        ))}
        <Key className="col-span-3" tone="bg-[#1a73e8] text-white" label="Enter">
          <MdKeyboardReturn className="h-9 w-9" />
        </Key>
        <Key tone={DARK} label="Left shift">
          <ShiftIcon />
        </Key>
        {[..."zxcvbnm!?"].map((k) => (
          <Key key={k}>{k}</Key>
        ))}
        <Key tone={DARK} label="Right shift">
          <ShiftIcon />
        </Key>
        <Key tone={DARK}>?123</Key>
        <Key tone={MARK}>,</Key>
        <Key className="col-span-12" label="Space" />
        <Key className="col-span-2 col-start-19" tone={MARK}>
          .
        </Key>
        <Key tone={DARK}>?123</Key>
      </div>
    </div>
  );
}

function NavBar() {
  const button = "flex w-[120px] items-center justify-center";
  return (
    <nav className="flex h-[82px] bg-white px-3 pb-0.5 text-[#666]">
      <button type="button" aria-label="Back" className={button}>
        <svg className="h-6 w-6" viewBox="0 0 24 24" fill="currentColor" aria-hidden="true">
          <path d="M1 0H23Q25 0 24 2L13 21Q12 22 11 21L0 2Q-1 0 1 0Z" />
        </svg>
      </button>
      <button type="button" aria-label="Home" className={button}>
        <span className="h-[21px] w-[21px] rounded-full bg-current" />
      </button>
      <button type="button" aria-label="Switch keyboard" className={`ml-auto ${button}`}>
        <MdKeyboard className="h-[42px] w-[42px] text-[#757575]" />
      </button>
      <button type="button" aria-label="Recent apps" className={button}>
        <span className="h-[23px] w-[23px] rounded-xs bg-current" />
      </button>
    </nav>
  );
}

function SearchDialog() {
  const [city, setCity] = useState("Barcelona");
  return (
    <div className="absolute inset-0 z-10 flex items-center justify-center pb-0.5">
      <form
        role="dialog"
        aria-labelledby="dialog-title"
        onSubmit={(e) => e.preventDefault()}
        className="flex h-[30%] w-4/5 flex-col rounded-sm bg-white p-[22px] shadow-[0_6px_76px_4px_rgba(0,0,0,0.55)]"
      >
        <h2 id="dialog-title" className="mt-16 text-3xl leading-10 font-medium text-black">
          Search for a city
        </h2>
        <input
          aria-label="City"
          value={city}
          onChange={(e) => setCity(e.target.value)}
          className="mt-24 w-full border-b-3 border-[#2196f3] text-2xl leading-7 text-[#2196f3] outline-none"
        />
        <button type="submit" className="mt-auto mr-[31px] h-[54px] w-[132px] self-end rounded-xs bg-[#2196f3] text-[21px] text-white shadow-[0_2px_6px_rgba(0,0,0,0.15)]">
          Search
        </button>
      </form>
    </div>
  );
}

export default function App() {
  return (
    <div className="flex min-h-screen flex-col overflow-hidden font-[Roboto,sans-serif]">
      <StatusBar />
      <div className="relative flex flex-1 flex-col">
        <header className="flex h-24 items-center justify-between bg-[#092d49] px-9 text-[#575757]">
          <h1 className="text-3xl font-medium">Skatespot Map</h1>
          <button type="button" aria-label="Search">
            <MdSearch className="h-9 w-9" />
          </button>
        </header>
        <main className="relative flex-1 overflow-hidden">
          <WorldMap />
        </main>
        <Keyboard />
        <SearchDialog />
      </div>
      <NavBar />
    </div>
  );
}
